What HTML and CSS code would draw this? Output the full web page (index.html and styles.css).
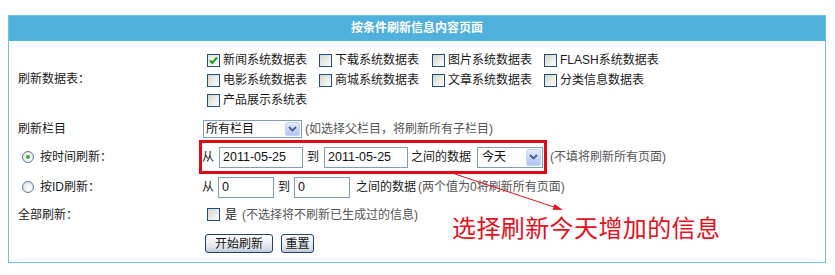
FILE: index.html
```html
<!DOCTYPE html>
<html lang="zh-CN">
<head>
<meta charset="utf-8">
<title>按条件刷新信息内容页面</title>
<link rel="stylesheet" href="styles.css">
</head>
<body>
<div class="panel">
  <div class="head">按条件刷新信息内容页面</div>

  <div class="row r-tables">
    <div class="lbl">刷新数据表：</div>
    <div class="val">
      <div class="cbgrid">
        <label class="item"><span class="ck on"><svg viewBox="0 0 11 11" width="11" height="11"><path d="M2 5.5 L4.3 8 L9 2.5" fill="none" stroke="#21a121" stroke-width="2"/></svg></span>新闻系统数据表</label>
        <label class="item"><span class="ck"></span>下载系统数据表</label>
        <label class="item"><span class="ck"></span>图片系统数据表</label>
        <label class="item"><span class="ck"></span>FLASH系统数据表</label>
        <label class="item"><span class="ck"></span>电影系统数据表</label>
        <label class="item"><span class="ck"></span>商城系统数据表</label>
        <label class="item"><span class="ck"></span>文章系统数据表</label>
        <label class="item"><span class="ck"></span>分类信息数据表</label>
        <label class="item"><span class="ck"></span>产品展示系统表</label>
      </div>
    </div>
  </div>

  <div class="row r-class">
    <div class="lbl">刷新栏目</div>
    <div class="val">
      <span class="sel sel-class"><span class="sel-text">所有栏目</span><span class="sel-btn"><svg viewBox="0 0 9 6" width="9" height="6"><path d="M1 1 L4.5 4.5 L8 1" fill="none" stroke="#4a5f8c" stroke-width="1.8"/></svg></span></span>
      <span class="hint h-class">(如选择父栏目，将刷新所有子栏目)</span>
    </div>
  </div>

  <div class="row r-time">
    <div class="lbl lbl-radio"><span class="radio on"></span>按时间刷新：</div>
    <div class="val">
      <span class="redbox">
        <span>从</span>
        <input class="txt t-date t-first" type="text" value="2011-05-25">
        <span class="to">到</span>
        <input class="txt t-date t-second" type="text" value="2011-05-25">
        <span class="between">之间的数据</span>
        <span class="sel sel-day"><span class="sel-text">今天</span><span class="sel-btn"><svg viewBox="0 0 9 6" width="9" height="6"><path d="M1 1 L4.5 4.5 L8 1" fill="none" stroke="#4a5f8c" stroke-width="1.8"/></svg></span></span>
      </span>
      <span class="hint h-time">(不填将刷新所有页面)</span>
    </div>
  </div>

  <div class="row r-id">
    <div class="lbl lbl-radio"><span class="radio"></span>按ID刷新：</div>
    <div class="val">
      <span>从</span>
      <input class="txt t-id t-first-id" type="text" value="0">
      <span class="to-id">到</span>
      <input class="txt t-id t-second-id" type="text" value="0">
      <span class="between-id">之间的数据</span>
      <span class="hint h-id">(两个值为0将刷新所有页面)</span>
    </div>
  </div>

  <div class="row r-all">
    <div class="lbl">全部刷新：</div>
    <div class="val">
      <span class="ck ck-all"></span><span class="yes">是</span><span class="hint h-all">(不选择将不刷新已生成过的信息)</span>
    </div>
  </div>

  <div class="row r-btn">
    <div class="lbl"></div>
    <div class="val">
      <button class="btn b-start" type="button">开始刷新</button>
      <button class="btn b-reset" type="button">重置</button>
    </div>
  </div>

  <svg class="arrow" width="818" height="247" viewBox="0 0 818 247">
    <line x1="440" y1="156" x2="548" y2="192" stroke="#e4141e" stroke-width="1"/>
    <polygon points="554,194 545.5,188 543.6,193.7" fill="#e4141e"/>
  </svg>
  <div class="note">选择刷新今天增加的信息</div>
</div>
</body>
</html>
```

FILE: styles.css
```css
* { box-sizing: border-box; }

body {
  margin: 0;
  background: #ffffff;
  font-family: "Liberation Sans", "Noto Sans CJK SC", sans-serif;
  font-size: 12px;
  color: #1a1a1a;
}

.panel {
  position: relative;
  margin: 15px 0 0 8px;
  width: 818px;
  height: 248px;
  border: 1px solid #6fbfe3;
  background: #ffffff;
}

.head {
  height: 25px;
  line-height: 25px;
  background: #50b1dc;
  color: #ffffff;
  font-weight: bold;
  text-align: center;
  font-size: 12px;
}

.row {
  display: grid;
  grid-template-columns: 193px 1fr;
  align-items: center;
}

.lbl {
  padding-left: 9px;
  line-height: 16px;
  display: flex;
  align-items: center;
}

.lbl-radio { padding-left: 13px; }

.val {
  display: flex;
  align-items: center;
  line-height: 16px;
  white-space: nowrap;
}

/* checkbox table */
.r-tables { height: 76px; }
.r-tables .val { align-self: start; padding-top: 9px; }

.cbgrid {
  display: grid;
  grid-template-columns: 112px 113px 112px auto;
  grid-auto-rows: 20px;
  margin-left: 5px;
}

.item {
  display: flex;
  align-items: center;
  gap: 3px;
}

.ck {
  display: inline-flex;
  align-items: center;
  justify-content: center;
  width: 13px;
  height: 13px;
  border: 1px solid #1f4f7e;
  background: linear-gradient(135deg, #d6d6d0 0%, #f2f2ee 70%, #ffffff 100%);
  flex: none;
}

.ck.on { background: linear-gradient(135deg, #e4e4de 0%, #ffffff 100%); }

/* select */
.r-class { height: 23px; }

.sel {
  display: inline-flex;
  align-items: stretch;
  border: 1px solid #7f9db9;
  background: #ffffff;
  padding: 1px;
}

.sel-text {
  flex: 1;
  display: flex;
  align-items: center;
  padding-left: 1px;
  color: #111;
}

.sel-btn {
  width: 15px;
  display: flex;
  align-items: center;
  justify-content: center;
  border: 1px solid #c3d3f5;
  border-radius: 2px;
  background: linear-gradient(#e4ecfd, #c1d3f8 60%, #b2c6f1);
}

.sel-class { width: 99px; height: 18px; margin-left: 1px; }
.sel-day { width: 66px; height: 21px; margin-left: 6px; }
.sel-day .sel-text { padding-left: 3px; }

.hint { color: #555555; }
.h-class { margin-left: 3px; }

/* time row */
.r-time { height: 34px; }

.redbox {
  display: inline-flex;
  align-items: center;
  height: 34px;
  margin-left: -3px;
  border: 3px solid #e10a14;
  padding-right: 1px;
}

.txt {
  border: 1px solid #7f9db9;
  background: #ffffff;
  font-family: "Liberation Sans", sans-serif;
  font-size: 12.5px;
  color: #111;
  padding: 0 3px;
  margin: 0;
  outline: none;
}

.t-date { width: 84px; height: 21px; }
.t-first { margin-left: 5px; }
.to { margin-left: 4px; }
.t-second { margin-left: 5px; }
.between { margin-left: 3px; }
.h-time { margin-left: 3px; }

/* radio */
.radio {
  display: inline-block;
  width: 12px;
  height: 12px;
  border-radius: 50%;
  border: 1px solid #5d7a9c;
  background: radial-gradient(circle at 60% 60%, #ffffff 0%, #e6e6e0 70%, #d0d0c8 100%);
  margin-right: 6px;
  position: relative;
  flex: none;
}

.radio.on::after {
  content: "";
  position: absolute;
  left: 3px;
  top: 3px;
  width: 4px;
  height: 4px;
  border-radius: 50%;
  background: #3fa83f;
}

/* id row */
.r-id { height: 26px; }
.t-id { width: 56px; height: 21px; }
.t-first-id { margin-left: 4px; }
.to-id { margin-left: 4px; }
.t-second-id { margin-left: 4px; }
.between-id { margin-left: 6px; }
.h-id { margin-left: 2px; }

/* all row */
.r-all { height: 29px; }
.ck-all { margin-left: 5px; }
.yes { margin-left: 5px; }
.h-all { margin-left: 5px; }

/* buttons */
.r-btn { height: 32px; align-items: start; }
.r-btn .val { padding-top: 5px; }

.btn {
  height: 19px;
  padding: 0;
  margin: 0;
  border: 1px solid #25426e;
  border-radius: 3px;
  background: linear-gradient(#ffffff, #eef0f4 45%, #d4dae4 85%, #bcc6d4);
  font-family: "Liberation Sans", "Noto Sans CJK SC", sans-serif;
  font-size: 12px;
  color: #111;
  line-height: 16px;
}

.b-start { width: 68px; margin-left: 3px; }
.b-reset { width: 33px; margin-left: 8px; }

/* annotation */
.arrow {
  position: absolute;
  left: 0;
  top: 0;
  pointer-events: none;
}

.note {
  position: absolute;
  left: 443px;
  top: 199px;
  font-family: "Noto Sans CJK SC", sans-serif;
  font-size: 24px;
  line-height: 24px;
  letter-spacing: 0.4px;
  color: #e4101c;
  white-space: nowrap;
}
```
